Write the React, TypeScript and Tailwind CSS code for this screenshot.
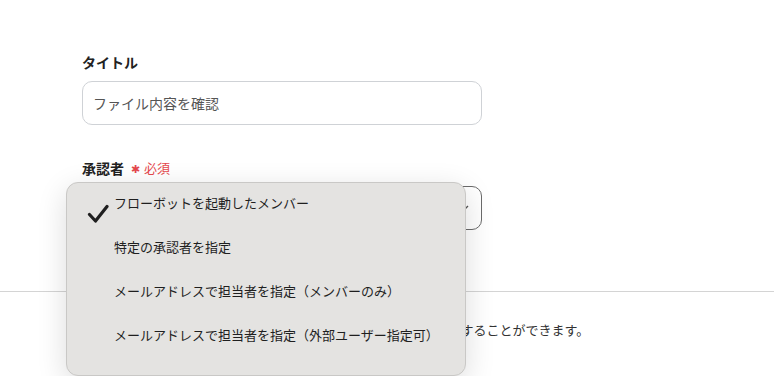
const font = "font-['Noto_Sans_CJK_JP','Noto_Sans',sans-serif]"

const items = [
  'フローボットを起動したメンバー',
  '特定の承認者を指定',
  'メールアドレスで担当者を指定（メンバーのみ）',
  'メールアドレスで担当者を指定（外部ユーザー指定可）',
]

const Check = () => (
  <svg width="22" height="20" viewBox="0 0 22 20" className="absolute left-[20px] top-[23px]">
    <path d="M2.5 10.5 L8.5 17 L20 2.5" fill="none" stroke="#1f1f1f" strokeWidth="3.2" strokeLinecap="round" strokeLinejoin="round" />
  </svg>
)

export default function App() {
  return (
    <div className={`relative w-[774px] h-[376px] overflow-hidden bg-white ${font}`}>
      <div className="pt-[52px]">
        <div className="pl-[82px]">
          <div className="h-5 leading-5 text-[14px] font-bold text-[#222]">タイトル</div>
          <div className="mt-[9px] w-[400px] h-[44px] rounded-[10px] border border-[#cfd2d6] flex items-center pl-[10px] text-[14px] text-[#555]">
            ファイル内容を確認
          </div>

          <div className="mt-[33px] h-5 flex items-center gap-[7px]">
            <span className="text-[14px] font-bold text-[#222] leading-5">承認者</span>
            <span className="text-[13px] text-[#e5484d] leading-5 flex items-center gap-[4px]">
              <span className="text-[11px]">✱</span>
              <span>必須</span>
            </span>
          </div>
          <div className="mt-[8px] w-[400px] h-[44px] rounded-[10px] border border-[#6b6b6b] flex items-center justify-end pr-[12px]">
            <svg width="10" height="6" viewBox="0 0 10 6">
              <path d="M1 1 L5 5 L9 1" fill="none" stroke="#555" strokeWidth="1.4" />
            </svg>
          </div>
        </div>

        <div className="mt-[61px] border-t border-[#d4d4d4]" />

        <div className="pl-[84px] mt-[28px] h-5 leading-5 text-[13px] text-[#333]">
          承認者を指定すると、フローボットの実行時に承認の依頼を送信することができます。
        </div>
      </div>

      <div className="absolute left-[66px] top-[182px] w-[400px] h-[194px] rounded-[12px] bg-[#e4e3e1] border border-[#c9c8c6] shadow-[0_8px_30px_rgba(0,0,0,0.14)]">
        <div className="relative -mt-[2px]">
          <Check />
          {items.map((t) => (
            <div key={t} className="h-[44px] flex items-center pl-[47px] text-[13px] text-[#1f1f1f]">
              {t}
            </div>
          ))}
        </div>
      </div>
    </div>
  )
}
